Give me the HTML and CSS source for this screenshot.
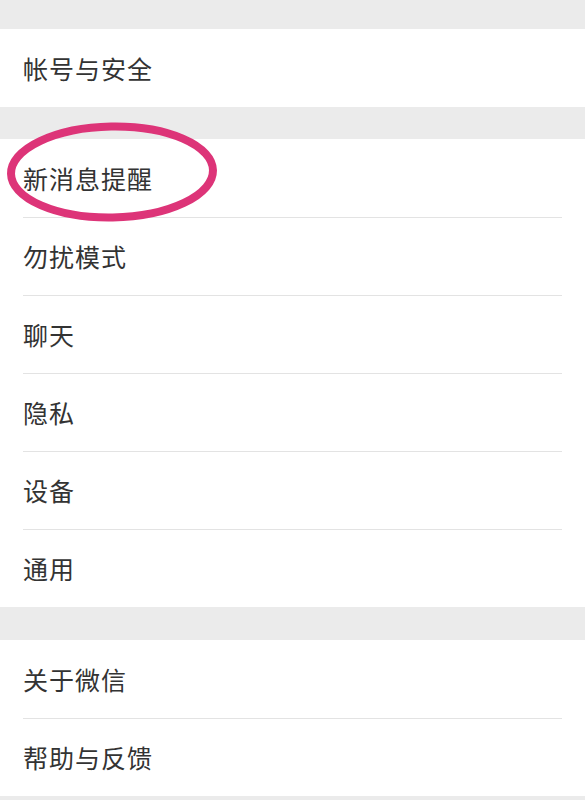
FILE: index.html
```html
<!DOCTYPE html>
<html lang="zh-CN">
<head>
<meta charset="utf-8">
<title>设置</title>
<link rel="stylesheet" href="styles.css">
</head>
<body>
<div class="page">
  <div class="gap gap-top"></div>
  <div class="group">
    <div class="row"><span class="label">帐号与安全</span></div>
  </div>
  <div class="gap gap-mid"></div>
  <div class="group">
    <div class="row highlight-host">
      <span class="label">新消息提醒</span>
      <svg class="circle" width="220" height="110" viewBox="0 0 220 110">
        <ellipse cx="112" cy="54" rx="101" ry="45.5" fill="none" stroke="#dd3478" stroke-width="8" transform="rotate(-1 112 54)"/>
      </svg>
    </div>
    <div class="row"><span class="label">勿扰模式</span></div>
    <div class="row"><span class="label">聊天</span></div>
    <div class="row"><span class="label">隐私</span></div>
    <div class="row"><span class="label">设备</span></div>
    <div class="row"><span class="label">通用</span></div>
  </div>
  <div class="gap gap-low"></div>
  <div class="group">
    <div class="row"><span class="label">关于微信</span></div>
    <div class="row"><span class="label">帮助与反馈</span></div>
  </div>
  <div class="gap gap-bottom"></div>
</div>
</body>
</html>
```
FILE: styles.css
```css
html, body {
  margin: 0;
  padding: 0;
  background: #ebebeb;
}
.page {
  width: 585px;
  font-family: "Noto Sans CJK SC", "Noto Sans", sans-serif;
}
.gap-top { height: 29px; }
.gap-mid { height: 32px; }
.gap-low { height: 33px; }
.gap-bottom { height: 20px; }
.group {
  background: #ffffff;
  padding-left: 23px;
  padding-right: 23px;
}
.row {
  height: 78px;
  display: flex;
  align-items: center;
  box-sizing: border-box;
  border-top: 1px solid #e3e3e3;
}
.row:first-child {
  border-top: none;
}
.label {
  font-size: 25px;
  line-height: 1;
  color: #333333;
  letter-spacing: 1px;
}
.highlight-host {
  position: relative;
}
.circle {
  position: absolute;
  left: -23px;
  top: -21px;
}
```
